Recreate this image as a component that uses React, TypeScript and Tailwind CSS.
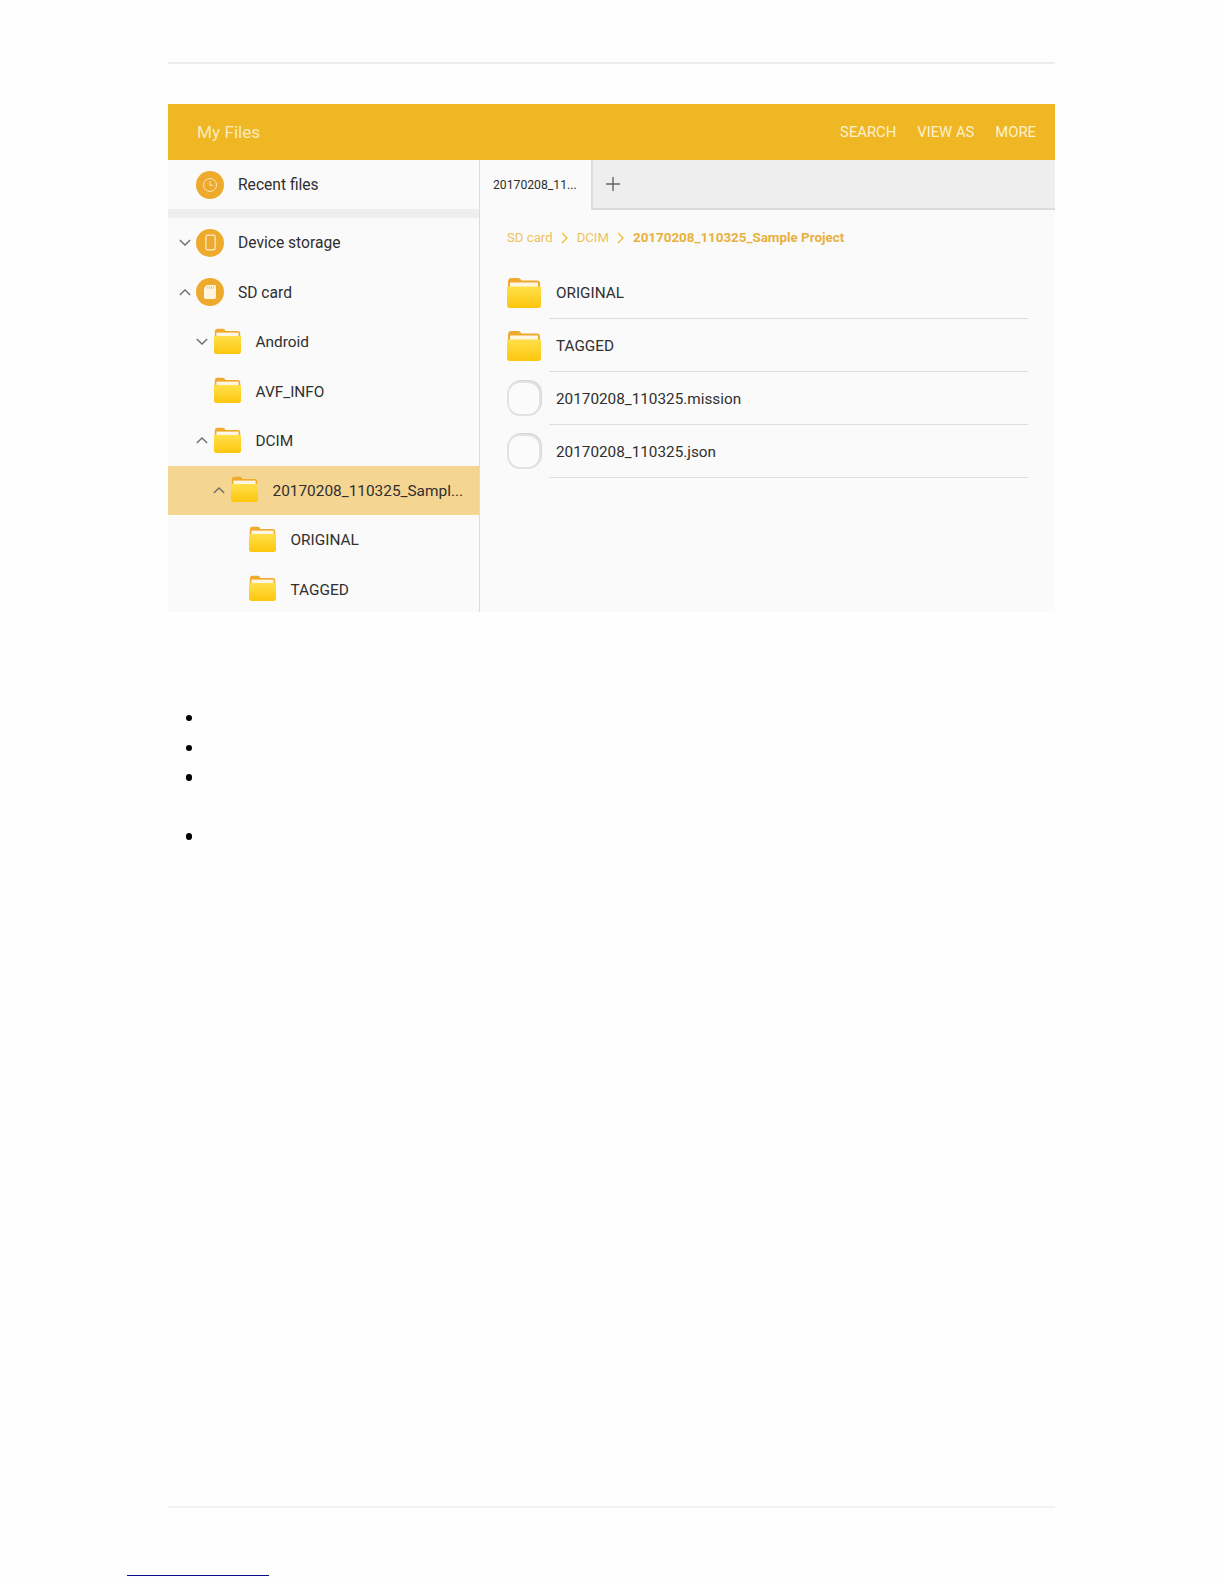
const Folder = ({ className = "w-[27px] h-[26px]" }: { className?: string }) => (
  <svg viewBox="0 0 34 31" preserveAspectRatio="none" className={className}>
    <defs>
      <linearGradient id="fold" x1="0" y1="0" x2="0" y2="1">
        <stop offset="0" stopColor="#ffe04a" />
        <stop offset="1" stopColor="#fdc60d" />
      </linearGradient>
    </defs>
    <path d="M1 5c0-2 1-4 3-4h7c1.500 0 2.500 1 3.500 2.500h15.500c2 0 3 1 3 3V12H1z" fill="#f0a92b" />
    <rect x="3" y="5.500" width="28" height="6" fill="#fdf6e3" />
    <path d="M0 9.500h34V28c0 1.800-1 3-3 3H3c-2 0-3-1.200-3-3z" fill="url(#fold)" />
  </svg>
);

const Chevron = ({ up }: { up?: boolean }) => (
  <svg viewBox="0 0 14 8" className="w-[12px] h-[7px]" fill="none" stroke="#6b6b6b" strokeWidth="1.500">
    <path d={up ? "M1 7l6-6 6 6" : "M1 1l6 6 6-6"} />
  </svg>
);

const Circle = ({ children }: { children: React.ReactNode }) => (
  <div className="w-[28px] h-[28px] rounded-full bg-[#eeaa2d] flex items-center justify-center shrink-0">{children}</div>
);

const ClockIcon = () => (
  <svg viewBox="0 0 16 16" className="w-[16px] h-[16px]" fill="none" stroke="#fbe6b8" strokeWidth="1">
    <circle cx="8" cy="8" r="6.500" />
    <path d="M8 4v4.300h3.200" />
  </svg>
);

const PhoneIcon = () => (
  <svg viewBox="0 0 12 18" className="w-[11px] h-[17px]" fill="none" stroke="#fdf0d0" strokeWidth="1.300">
    <rect x="1" y="1" width="10" height="16" rx="1.800" />
  </svg>
);

const SdIcon = () => (
  <svg viewBox="0 0 13 15" className="w-[12px] h-[14px]">
    <path d="M3 0h8.500c.8 0 1.500.7 1.500 1.500v12c0 .8-.7 1.500-1.500 1.500h-10C.7 15 0 14.300 0 13.500V3.500z" fill="#fff6e0" />
    <path d="M4 1v3M6 1v3M8 1v3M10 1v3" stroke="#eeaa2d" strokeWidth="0.700" />
  </svg>
);

const TreeRow = ({ indent, arrow, label, selected }: { indent: string; arrow?: "up" | "down"; label: string; selected?: boolean }) => (
  <div className={`h-[49.500px] flex items-center ${selected ? "bg-[#f5d592]" : ""}`}>
    <div className={`${indent} flex items-center`}>
      <div className="w-[12px] mr-[6px] flex justify-center">{arrow && <Chevron up={arrow === "up"} />}</div>
      <div className="-mt-[2px] flex"><Folder /></div>
      <span className="ml-[14.500px] pt-[2px] text-[15.400px] text-[#2f2f2f] whitespace-nowrap">{label}</span>
    </div>
  </div>
);

const FileRow = ({ label, folder }: { label: string; folder?: boolean }) => (
  <div className="h-[53px] flex items-center pl-[27px] pr-[27px]">
    <div className="w-[34px] shrink-0 flex justify-center">
      {folder ? (
        <Folder className="w-[34px] h-[31px]" />
      ) : (
        <div className="w-[34px] h-[35px] rounded-[13px] border-2 border-[#e2e2e2] bg-[#fbfbfb] shadow-[1px_-1px_0_#d8d8d8]" />
      )}
    </div>
    <div className="ml-[8px] flex-1 h-full flex items-center pl-[7px] pt-[3px] border-b border-[#dedede]">
      <span className="text-[15.300px] text-[#2f2f2f]">{label}</span>
    </div>
  </div>
);

export default function App() {
  return (
    <div className="w-[1224px] h-[1584px] bg-[#fefefe] overflow-hidden font-['Roboto',sans-serif]">
      <div className="pl-[168px] pr-[169px] pt-[62px]">
        <div className="border-t-2 border-[#ececec]" />

        {/* screenshot */}
        <div className="mt-[40px] h-[508px] flex flex-col bg-[#fafafa] overflow-hidden">
          <div className="h-[56px] shrink-0 bg-[#eeb723] flex items-center justify-between pl-[29px] pr-[19px]">
            <span className="pt-[2px] text-[17.200px] text-[#fbeac0]">My Files</span>
            <div className="flex gap-[21px] text-[14.800px] text-[#fdf1d0]">
              <span>SEARCH</span>
              <span>VIEW AS</span>
              <span>MORE</span>
            </div>
          </div>

          <div className="flex flex-1 min-h-0">
            <div className="w-[312px] shrink-0 border-r border-[#dcdcdc]">
              <div className="h-[49px] flex items-center pl-[28px]">
                <Circle><ClockIcon /></Circle>
                <span className="ml-[14px] pt-[2px] text-[15.600px] text-[#2f2f2f]">Recent files</span>
              </div>
              <div className="h-[9px] bg-[#eeeeee]" />
              <div className="h-[49.500px] flex items-center pl-[11px]">
                <div className="w-[12px] mr-[5px] flex justify-center"><Chevron /></div>
                <Circle><PhoneIcon /></Circle>
                <span className="ml-[14px] pt-[2px] text-[15.600px] text-[#2f2f2f]">Device storage</span>
              </div>
              <div className="h-[49.500px] flex items-center pl-[11px]">
                <div className="w-[12px] mr-[5px] flex justify-center"><Chevron up /></div>
                <Circle><SdIcon /></Circle>
                <span className="ml-[14px] pt-[2px] text-[15.600px] text-[#2f2f2f]">SD card</span>
              </div>
              <TreeRow indent="pl-[28px]" arrow="down" label="Android" />
              <TreeRow indent="pl-[28px]" label="AVF_INFO" />
              <TreeRow indent="pl-[28px]" arrow="up" label="DCIM" />
              <TreeRow indent="pl-[45px]" arrow="up" label="20170208_110325_Sampl..." selected />
              <TreeRow indent="pl-[63px]" label="ORIGINAL" />
              <TreeRow indent="pl-[63px]" label="TAGGED" />
            </div>

            <div className="flex-1 min-w-0">
              <div className="h-[50px] flex bg-[#eeeeee] border-b-2 border-[#dcdcdc]">
                <div className="w-[113px] h-[50px] bg-[#fafafa] border-r-2 border-[#dcdcdc] flex items-center pl-[13px] text-[12.200px] text-[#2f2f2f]">
                  20170208_11...
                </div>
                <div className="pl-[13px] flex items-center">
                  <svg viewBox="0 0 14 14" className="w-[14px] h-[14px]" stroke="#666" strokeWidth="1.400">
                    <path d="M7 0v14M0 7h14" />
                  </svg>
                </div>
              </div>

              <div className="h-[56px] flex items-center pl-[27px] text-[13.200px] text-[#eec25c]">
                <span>SD card</span>
                <svg viewBox="0 0 7 12" className="w-[7px] h-[12px] mx-[8.500px]" fill="none" stroke="#eeb723" strokeWidth="1.200"><path d="M1 1l5 5-5 5" /></svg>
                <span>DCIM</span>
                <svg viewBox="0 0 7 12" className="w-[7px] h-[12px] mx-[8.500px]" fill="none" stroke="#eeb723" strokeWidth="1.200"><path d="M1 1l5 5-5 5" /></svg>
                <span className="font-bold text-[13.400px] text-[#e8b13c]">20170208_110325_Sample Project</span>
              </div>

              <FileRow folder label="ORIGINAL" />
              <FileRow folder label="TAGGED" />
              <FileRow label="20170208_110325.mission" />
              <FileRow label="20170208_110325.json" />
            </div>
          </div>
        </div>

        {/* bullets, their text is blank in the source */}
        <div className="mt-[102.750px] pl-[17.750px] flex flex-col gap-[23.300px]">
          <div className="w-[6.500px] h-[6.500px] rounded-full bg-black" />
          <div className="w-[6.500px] h-[6.500px] rounded-full bg-black" />
          <div className="w-[6.500px] h-[6.500px] rounded-full bg-black" />
          <div className="w-[6.500px] h-[6.500px] rounded-full bg-black mt-[29.300px]" />
        </div>

        <div className="mt-[666px] border-t-2 border-[#f2f2f2]" />
      </div>

      <div className="ml-[127px] mt-[67px] w-[142px] h-[1px] bg-[#0a0a8a]" />
    </div>
  );
}
